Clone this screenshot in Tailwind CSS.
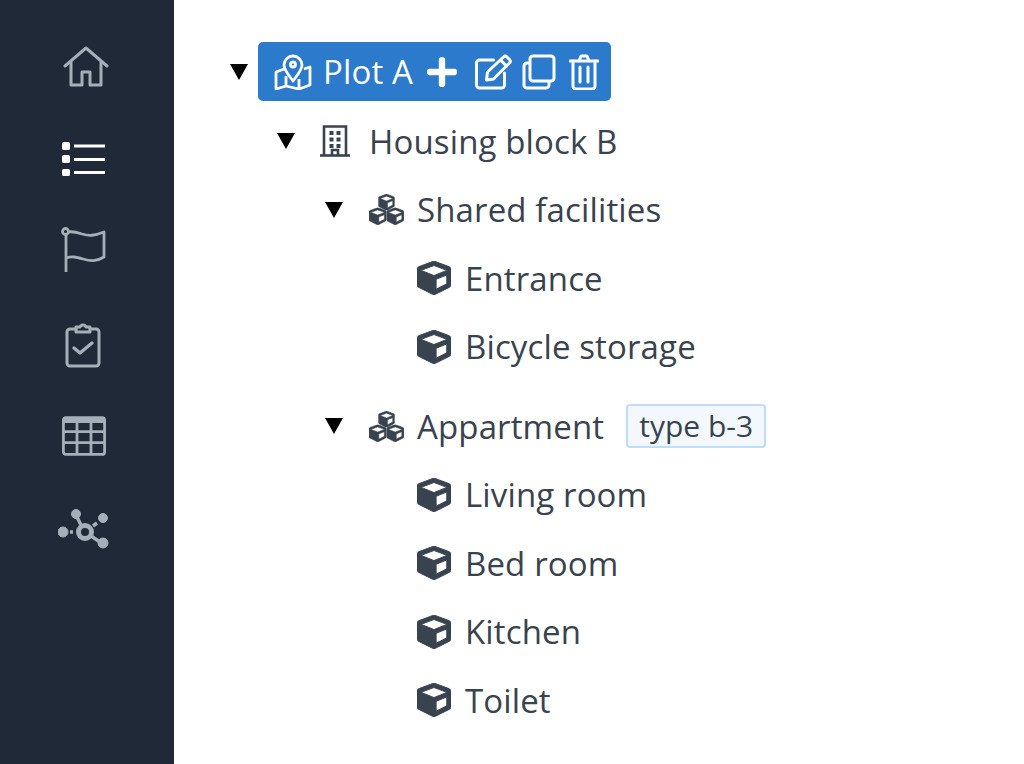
<!DOCTYPE html>
<html lang="en">

<head>
  <meta charset="UTF-8">
  <meta name="viewport" content="width=device-width, initial-scale=1.0">
  <title>Plot tree</title>
  <script src="https://cdn.jsdelivr.net/npm/@tailwindcss/browser@4"></script>
</head>

<body class="bg-white font-['Open_Sans',sans-serif] text-[#39434f]">
  <svg class="hidden" xmlns="http://www.w3.org/2000/svg">
    <symbol id="cube" viewBox="0 0 512 512"><path fill="currentColor" stroke="currentColor" stroke-width="14" d="M239.1 6.3l-208 78c-18.7 7-31.1 25-31.1 45v225.1c0 18.2 10.3 34.8 26.5 42.9l208 104c13.5 6.8 29.4 6.8 42.9 0l208-104c16.3-8.1 26.5-24.8 26.5-42.9V129.3c0-20-12.4-37.9-31.1-44.9l-208-78C262 2.2 250 2.2 239.1 6.3zM256 68.4l192 72v1.1l-192 78-192-78v-1.1l192-72zm32 356V275.5l160-65v133.9l-160 80z"/></symbol>
    <symbol id="cubes" viewBox="0 0 36 34">
      <use href="#cube" x="9.5" y="1" width="17" height="17"/>
      <use href="#cube" x="0" y="15" width="18" height="18"/>
      <use href="#cube" x="18" y="15" width="18" height="18"/>
    </symbol>
    <symbol id="caret" viewBox="0 0 18 16"><polygon fill="#000" points="0,0 18,0 9,16"/></symbol>
  </svg>

  <div class="flex h-[764px] w-[1024px] overflow-hidden">
    <!-- sidebar -->
    <nav class="flex w-[174px] flex-none flex-col items-center bg-[#1f2937] pt-[44px] text-[#a5aeb9]">
      <a class="flex h-[46px] w-full items-center justify-center">
        <svg class="mr-[2px] h-[44px] w-[46px]" viewBox="0 0 46 44" fill="none" stroke="currentColor" stroke-width="3" stroke-linejoin="round" stroke-linecap="round"><path d="M2 21 23 3l21 18"/><path d="M8 17v23h11V27h8v13h11V17"/></svg>
      </a>
      <a class="mt-[45px] flex h-[46px] w-full items-center justify-center text-white">
        <svg class="mr-[6px] h-[36px] w-[46px]" viewBox="0 0 46 36" fill="currentColor"><rect x="1" y="2" width="8" height="8" rx="1.5"/><rect x="1" y="15" width="8" height="8" rx="1.5"/><rect x="1" y="29" width="8" height="7" rx="1.5"/><rect x="13" y="4.5" width="31" height="3"/><rect x="13" y="18" width="31" height="3"/><rect x="13" y="31" width="31" height="3"/></svg>
      </a>
      <a class="mt-[46px] flex h-[46px] w-full items-center justify-center">
        <svg class="mr-[6px] h-[46px] w-[46px]" viewBox="0 0 46 46" fill="none" stroke="currentColor" stroke-width="2.8" stroke-linejoin="round"><circle cx="4.5" cy="4.5" r="3"/><path d="M5 8v37"/><path d="M7 5c5-1 8 0 14 2 7 2 12 2 22-2v25c-8 5-14 4-21 2-7-2-11-3-17-1"/></svg>
      </a>
      <a class="mt-[49px] flex h-[46px] w-full items-center justify-center">
        <svg class="mr-[9px] h-[46px] w-[36px]" viewBox="0 0 36 46" fill="none" stroke="currentColor" stroke-width="3" stroke-linejoin="round" stroke-linecap="round"><path d="M11 7H5a3 3 0 0 0-3 3v31a3 3 0 0 0 3 3h26a3 3 0 0 0 3-3V10a3 3 0 0 0-3-3h-6"/><path d="M11 5h4a3.2 3.2 0 0 1 6 0h4v5H11z"/><path d="M9 26l6 5 12-10" stroke-width="3.4"/></svg>
      </a>
      <a class="mt-[45px] flex h-[46px] w-full items-center justify-center">
        <svg class="mr-[7px] h-[40px] w-[44px]" viewBox="0 0 44 40" fill="none" stroke="currentColor" stroke-width="2.800"><rect x="1.400" y="1.600" width="41.200" height="36.800" rx="2.500"/><path stroke-width="5" d="M1 4.500h42"/><path d="M1 15.700h42M1 26.700h42M15 5v33M29 5v33"/></svg>
      </a>
      <a class="mt-[48px] flex h-[46px] w-full items-center justify-center">
        <svg class="mr-[6px] h-[42px] w-[52px]" viewBox="0 0 52 42" fill="currentColor" stroke="currentColor"><circle cx="18" cy="5" r="4.500"/><circle cx="45" cy="9" r="4.500"/><circle cx="5" cy="23" r="5"/><circle cx="45" cy="34" r="5"/><circle cx="27" cy="23" r="6.500" fill="none" stroke-width="5"/><path fill="none" stroke-width="3.500" d="M19 8l5 10M33 27l9 6M12 23h3M35 17l4-3"/></svg>
      </a>
    </nav>

    <!-- tree -->
    <main class="flex-1 pl-[56px] pt-[42px] text-[33px] leading-none tracking-[0.13px]">
      <div class="flex h-[59px] items-center">
        <svg class="h-[16px] w-[18px] flex-none"><use href="#caret"/></svg>
        <div class="ml-[10px] flex h-[59px] w-[353px] items-center rounded-[5px] bg-[#2b7acb] pl-[16px] text-white">
          <svg class="h-[36px] w-[38px] flex-none" viewBox="0 0 38 36" fill="none" stroke="currentColor" stroke-width="2.800" stroke-linejoin="round"><path d="M10 15 2 18v17l10-3 13 3 11-4V13l-6 2"/><path d="M12 22v10M25 25v10"/><path d="M19 27c-5-7-9-11-9-16a9 9 0 0 1 18 0c0 5-4 9-9 16z"/><circle cx="19" cy="10.500" r="2.500"/></svg>
          <span class="ml-[11px]">Plot A</span>
          <svg class="ml-[14px] h-[34px] w-[30px] flex-none" viewBox="0 0 448 512"><path fill="currentColor" d="M416 208H272V64c0-17.670-14.330-32-32-32h-32c-17.670 0-32 14.330-32 32v144H32c-17.670 0-32 14.330-32 32v32c0 17.670 14.330 32 32 32h144v144c0 17.670 14.330 32 32 32h32c17.670 0 32-14.330 32-32V304h144c17.670 0 32-14.330 32-32v-32c0-17.670-14.330-32-32-32z"/></svg>
          <svg class="ml-[17px] h-[36px] w-[39px] flex-none" viewBox="0 0 38 36" fill="none" stroke="currentColor" stroke-width="3" stroke-linejoin="round" stroke-linecap="round"><path d="M19 6H5a3 3 0 0 0-3 3v22a3 3 0 0 0 3 3h22a3 3 0 0 0 3-3V19"/><path d="M13 18 29 3a2.500 2.500 0 0 1 3.500 0l2.500 2.500a2.500 2.500 0 0 1 0 3.500L19 25l-7 1z"/><path d="m26 6 6 6"/></svg>
          <svg class="ml-[9px] h-[36px] w-[34px] flex-none" viewBox="0 0 34 36" fill="none" stroke="currentColor" stroke-width="3" stroke-linejoin="round"><rect x="8" y="2" width="24" height="25" rx="3"/><path d="M8 9H5a3 3 0 0 0-3 3v19a3 3 0 0 0 3 3h19a3 3 0 0 0 3-3v-4"/></svg>
          <svg class="ml-[13px] h-[36px] w-[30px] flex-none" viewBox="0 0 30 36" fill="none" stroke="currentColor" stroke-width="3" stroke-linejoin="round" stroke-linecap="round"><path d="M1 7h28"/><path d="M10 7l2-5h6l2 5"/><path d="M4 7v25a3 3 0 0 0 3 3h16a3 3 0 0 0 3-3V7"/><path d="M11 13v15M19 13v15"/></svg>
        </div>
      </div>

      <ul class="pl-[47px] pt-[6px]">
        <li class="flex h-[68.500px] items-center">
          <svg class="h-[16px] w-[18px] flex-none"><use href="#caret"/></svg>
          <svg class="ml-[25px] h-[32px] w-[30px] flex-none" viewBox="0 0 30 32" fill="none" stroke="currentColor" stroke-width="2.600"><path d="M0 30.500h30"/><path d="M4 31V1.500h22V31"/><path d="M12 31v-6h6v6"/><g fill="currentColor" stroke="none"><rect x="9.500" y="6" width="4" height="4"/><rect x="16.500" y="6" width="4" height="4"/><rect x="9.500" y="12.500" width="4" height="4"/><rect x="16.500" y="12.500" width="4" height="4"/><rect x="9.500" y="19" width="4" height="4"/><rect x="16.500" y="19" width="4" height="4"/></g></svg>
          <span class="ml-[19px]">Housing block B</span>
        </li>
        <li class="pl-[48px]">
          <div class="flex h-[68.500px] items-center">
            <svg class="h-[16px] w-[18px] flex-none"><use href="#caret"/></svg>
            <svg class="ml-[26px] h-[33px] w-[35px] flex-none"><use href="#cubes"/></svg>
            <span class="ml-[13px]">Shared facilities</span>
          </div>
          <ul class="pl-[92px]">
            <li class="flex h-[68.500px] items-center"><svg class="h-[34px] w-[34px] flex-none"><use href="#cube"/></svg><span class="ml-[14px]">Entrance</span></li>
            <li class="flex h-[68.500px] items-center"><svg class="h-[34px] w-[34px] flex-none"><use href="#cube"/></svg><span class="ml-[14px]">Bicycle storage</span></li>
          </ul>
          <div class="mt-[11px] flex h-[68.500px] items-center">
            <svg class="h-[16px] w-[18px] flex-none"><use href="#caret"/></svg>
            <svg class="ml-[26px] h-[33px] w-[35px] flex-none"><use href="#cubes"/></svg>
            <span class="ml-[13px]">Appartment</span>
            <span class="ml-[22px] flex h-[44px] w-[140px] items-center justify-center rounded-[4px] border-2 border-[#bfdbfe] bg-[#f3f8ff] text-[30px] tracking-normal">type b-3</span>
          </div>
          <ul class="pl-[92px]">
            <li class="flex h-[68.500px] items-center"><svg class="h-[34px] w-[34px] flex-none"><use href="#cube"/></svg><span class="ml-[14px]">Living room</span></li>
            <li class="flex h-[68.500px] items-center"><svg class="h-[34px] w-[34px] flex-none"><use href="#cube"/></svg><span class="ml-[14px]">Bed room</span></li>
            <li class="flex h-[68.500px] items-center"><svg class="h-[34px] w-[34px] flex-none"><use href="#cube"/></svg><span class="ml-[14px]">Kitchen</span></li>
            <li class="flex h-[68.500px] items-center"><svg class="h-[34px] w-[34px] flex-none"><use href="#cube"/></svg><span class="ml-[14px]">Toilet</span></li>
          </ul>
        </li>
      </ul>
    </main>
  </div>
</body>

</html>
